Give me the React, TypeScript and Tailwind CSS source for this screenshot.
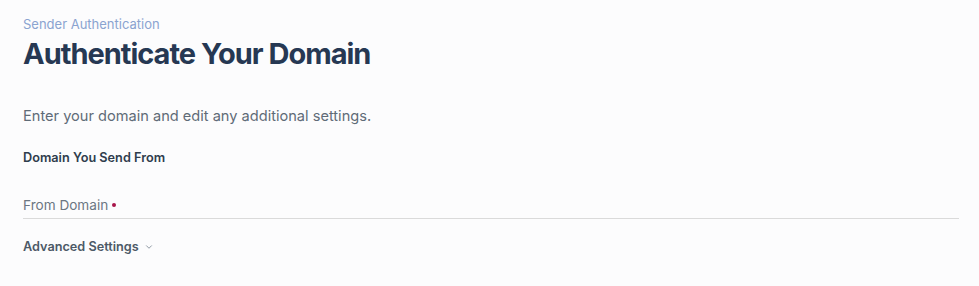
import { ChevronDown } from "lucide-react";

export default function App() {
  return (
    <div
      className="min-h-[286px] w-full bg-[#fcfcfd] pl-[23px] pr-[20px] pt-[15px]"
      style={{ fontFamily: "Inter, 'Noto Sans', sans-serif" }}
    >
      <p className="text-[13px] leading-[18px] text-[#8aa3d0]">Sender Authentication</p>
      <h1 className="mt-[2px] text-[29px] font-bold leading-[38px] tracking-[-1px] text-[#263853]">
        Authenticate Your Domain
      </h1>
      <p className="mt-[32px] text-[14.6px] leading-[22px] text-[#5f6b77]">
        Enter your domain and edit any additional settings.
      </p>
      <h2 className="mt-[22px] text-[12.7px] font-semibold leading-[18px] text-[#2f3d4d]">
        Domain You Send From
      </h2>
      <div className="mt-[29px] border-b border-[#dadada] pb-[4px]">
        <label className="flex items-center text-[13.6px] leading-[18px] text-[#6b7682]">
          From Domain
          <span className="ml-[4px] inline-block h-[4px] w-[4px] rounded-full bg-[#a8154a]" />
        </label>
      </div>
      <button className="mt-[19px] flex items-center gap-[5px] text-[12.7px] font-semibold leading-[18px] text-[#4c5967]">
        Advanced Settings
        <ChevronDown className="h-[10px] w-[10px] text-[#7a8591]" strokeWidth={2} />
      </button>
    </div>
  );
}
